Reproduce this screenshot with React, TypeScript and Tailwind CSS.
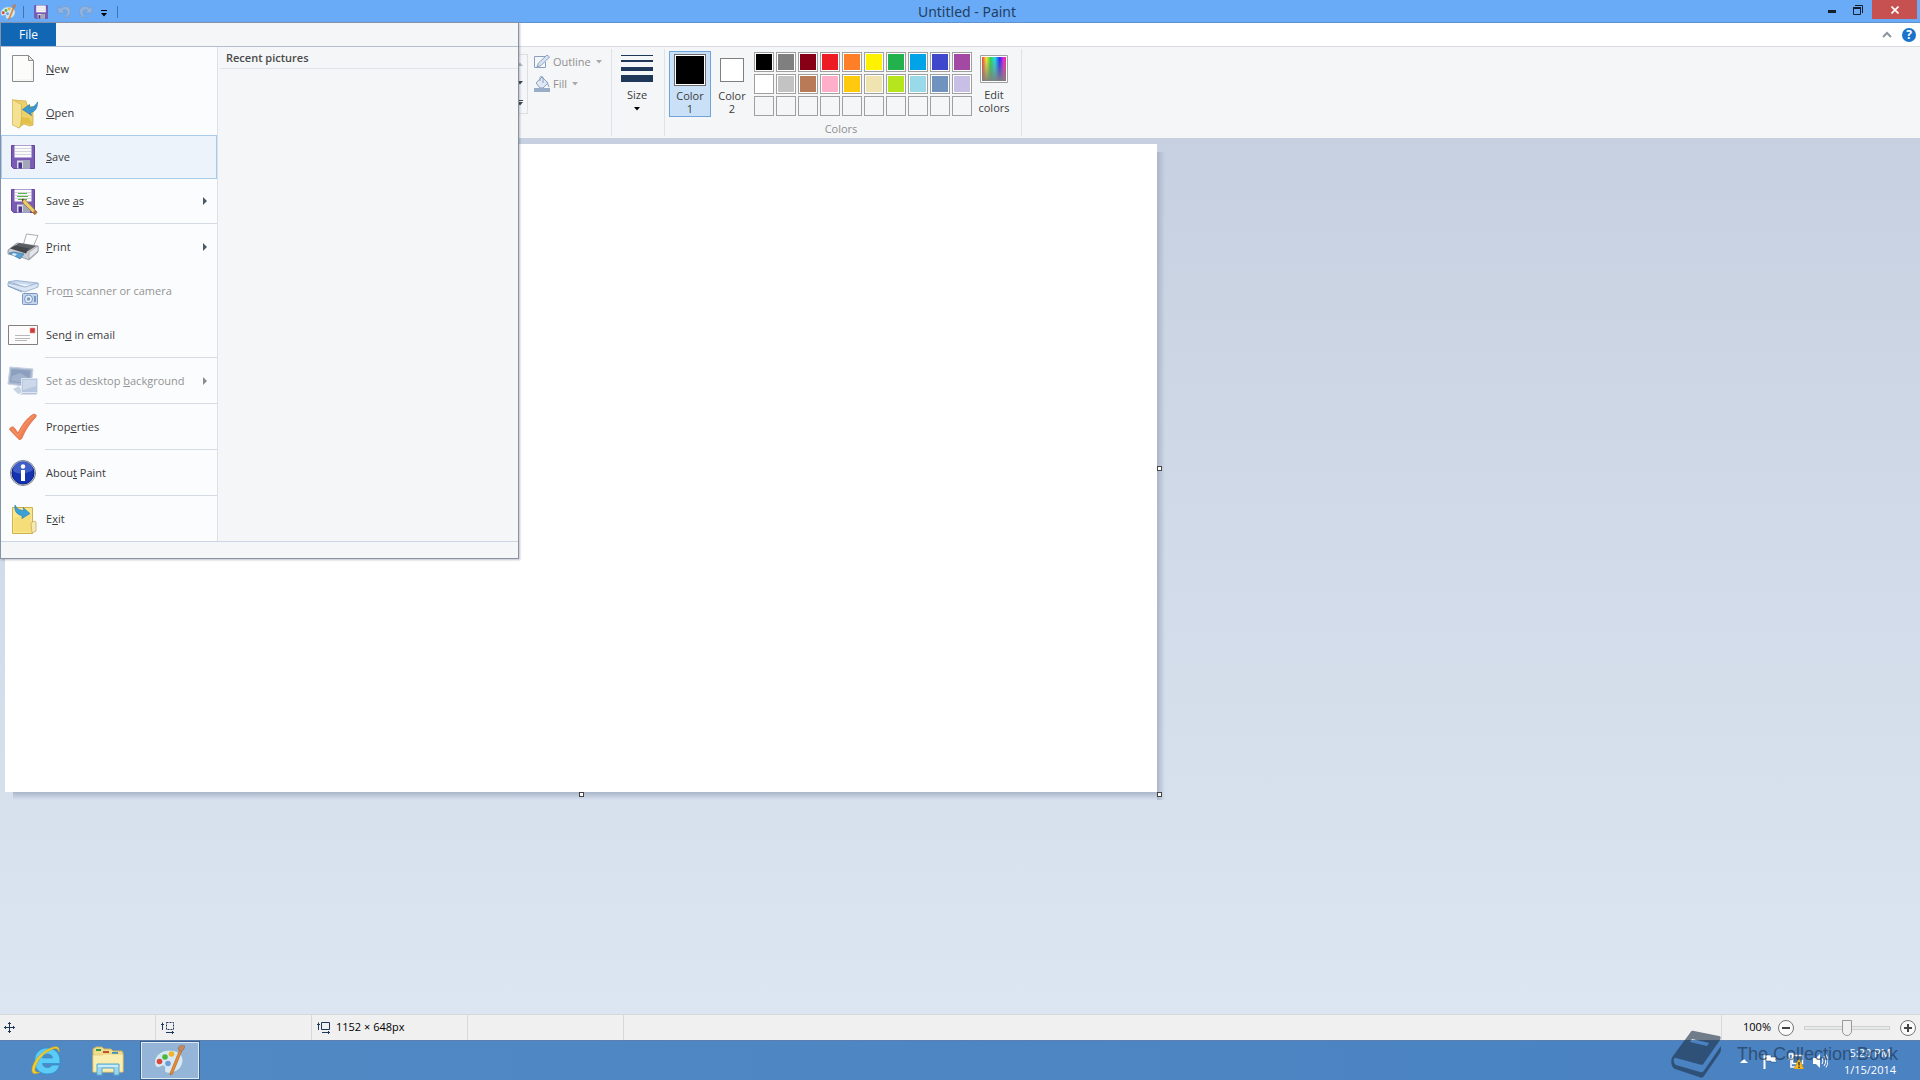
import React, { ReactNode, useState } from 'react';

interface MenuEntry {
  id: string;
  label: ReactNode;
  icon: ReactNode;
  disabled?: boolean;
  submenu?: boolean;
  active?: boolean;
  divided?: boolean;
}

const palette = [
  ['#000000', '#7f7f7f', '#880015', '#ed1c24', '#ff7f27', '#fff200', '#22b14c', '#00a2e8', '#3f48cc', '#a349a4'],
  ['#ffffff', '#c3c3c3', '#b97a57', '#ffaec9', '#ffc90e', '#efe4b0', '#b5e61d', '#99d9ea', '#7092be', '#c8bfe7'],
];

/* ---------- icons ---------- */

function PaletteIcon({ className }: { className: string }) {
  return (
    <svg viewBox="0 0 32 32" className={className} aria-hidden="true">
      <path
        d="M16 6C8 6 1.500 12 1.500 18c0 4 2 6 4.500 5.500 2-.5 2.500-2 4.500-1.500s1 3 1 5c1 2.500 4 2.500 7 2 7-1.500 12-7 11.500-13.500C29.500 9 23 6 16 6z"
        fill="#d6e8f4"
        stroke="#8fb4d0"
      />
      <circle cx="12" cy="13" r="2.800" fill="#4cb83c" />
      <circle cx="18.500" cy="10" r="2.800" fill="#f0b429" />
      <circle cx="6.500" cy="17.500" r="2.800" fill="#d9483b" />
      <circle cx="15" cy="19.500" r="2.800" fill="#6b9fd6" />
      <path d="M27 5l2 1.500L19.500 30l-2.500 1 .5-3z" fill="#e88a34" stroke="#b0601c" strokeWidth=".6" />
      <path d="M25 5c0-3 3-4.500 7-3-1 3-2 5-4 5.500z" fill="#c08a60" stroke="#94623c" strokeWidth=".5" />
    </svg>
  );
}

function FloppyShape({ children }: { children?: ReactNode }) {
  return (
    <>
      <path d="M4.500 4.500h23v23h-21l-2-2z" fill="#7a5cb4" stroke="#6345a0" />
      <path d="M7.500 4.500h17v12h-17z" fill="#fafafc" />
      <path d="M8 7.500h16M8 10.500h16M8 13.500h16" stroke="#d4d4da" />
      <path d="M10 19.500h13v8H10z" fill="#d9dbe3" />
      <path d="M16 19.500h7v8h-7z" fill="#a3a8b8" />
      <path d="M11.500 21.500h3.500v6h-3.500z" fill="#4f3790" />
      {children}
    </>
  );
}

function FloppyIcon({ className }: { className: string }) {
  return (
    <svg viewBox="0 0 32 32" className={className} aria-hidden="true">
      <FloppyShape />
    </svg>
  );
}

function SaveAsIcon() {
  return (
    <svg viewBox="0 0 32 32" className="size-8" aria-hidden="true">
      <FloppyShape>
        <path d="M11 8.500h9M10 11.500h11M11 14.500h9" stroke="#52b648" strokeWidth="1.200" />
        <path d="M15 14l3 .5L30 27l-2.500 2.500L16 18z" fill="#eccb6c" stroke="#8f7437" strokeWidth=".8" />
        <path d="M15 14l2 .5-1.500 2z" fill="#333" />
        <path d="M28 25l2.500 2.500-2.500 2.500-2.500-2.500z" fill="#b5714a" />
      </FloppyShape>
    </svg>
  );
}

function NewIcon() {
  return (
    <svg viewBox="0 0 32 32" className="size-8" aria-hidden="true">
      <path d="M5.500 2.500h16l5 5v21h-21z" fill="#fcfcfb" stroke="#8c8c8c" />
      <path d="M21.500 2.500v5h5z" fill="#e8e8e8" stroke="#8c8c8c" />
      <path d="M8 27h17V10" fill="none" stroke="#eeeeec" />
    </svg>
  );
}

function OpenIcon() {
  return (
    <svg viewBox="0 0 32 32" className="size-8" aria-hidden="true">
      <path d="M6 3l13 1 1 4 6 2v18l-3 1-6-2-6 4z" fill="#ecd06a" stroke="#cfae45" strokeWidth=".8" />
      <path d="M5.500 2.500l9 5v17l-2 6.500-7-3z" fill="#f5e193" stroke="#d2b650" strokeWidth=".8" />
      <path d="M14 20l8 1 4 7-9-2-4 4z" fill="#dfb93c" opacity=".7" />
      <path d="M15.500 12.500l7-5v3c3 0 6-1.500 8-5.500 0 7-3 10-7 10.500l1 3z" fill="#3b97cf" stroke="#1f74ad" strokeWidth=".6" />
    </svg>
  );
}

function PrintIcon() {
  return (
    <svg viewBox="0 0 32 32" className="size-8" aria-hidden="true">
      <path d="M16.500 13l3-10L31 4.500 26 16z" fill="#fdfdfd" stroke="#999" strokeWidth=".8" />
      <path d="M1 19l9-7 21 3v6l-9 8-5-2-16-4z" fill="#c9cdd3" stroke="#7d838c" strokeWidth=".7" />
      <path d="M5 17l7-5 17 3-8 5z" fill="#5b5e63" />
      <path d="M3 17.500l5-3 14 3-3 5z" fill="#43464b" />
      <path d="M22 21l9-6v5l-9 8z" fill="#e4e6e9" stroke="#8c9198" strokeWidth=".6" />
      <path d="M2 22l5-1 10 2-4 5z" fill="#5a9fd4" stroke="#376f9c" strokeWidth=".6" />
      <path d="M6 22l4 1-2 2-3-1z" fill="#d7ecf8" />
    </svg>
  );
}

function ScannerIcon() {
  return (
    <svg viewBox="0 0 32 32" className="size-8" aria-hidden="true">
      <path d="M1 7l8-1.500L31 8v2l-6 3z" fill="#cbd9ed" stroke="#8ea8cc" strokeWidth=".8" />
      <path d="M1 8l17 4 13-4v4l-13 5L1 11z" fill="#dbe5f3" stroke="#8ea8cc" strokeWidth=".8" />
      <path d="M8 8l15 2-5 1.500z" fill="#f0f5fb" />
      <path d="M1 11l14 6" stroke="#7f9bc3" />
      <rect x="15.500" y="18.500" width="15" height="11" rx="1" fill="#c6d6ec" stroke="#7a97c0" />
      <circle cx="21.500" cy="24" r="4" fill="#e6eef8" stroke="#7a97c0" />
      <circle cx="21.500" cy="24" r="1.800" fill="#7f9bc3" />
      <path d="M27 21h2v6h-2z" fill="#7a97c0" />
    </svg>
  );
}

function MailIcon() {
  return (
    <svg viewBox="0 0 32 32" className="size-8" aria-hidden="true">
      <path d="M1.500 6.500h29v19h-29z" fill="#fcfcfc" stroke="#85807e" />
      <path d="M8 16.500h15M8 19.500h15M8 21.500h12" stroke="#b9b9b9" />
      <path d="M23 9h5v5h-5z" fill="#cf3a39" stroke="#e8a2a0" strokeWidth=".6" />
    </svg>
  );
}

function DesktopIcon() {
  return (
    <svg viewBox="0 0 32 32" className="size-8" aria-hidden="true">
      <path d="M3 2l23 2-2 18L1 19z" fill="#a9b8cf" stroke="#c6d1e1" />
      <path d="M4.500 4l19 1.500L22 19 3 17z" fill="#8c9fbe" />
      <path d="M5 11l8-3 9 5-1 5-17-2z" fill="#a2b3cd" />
      <path d="M6 24l6-3 4 6-5 2z" fill="#c8d3e3" />
      <path d="M14.500 13.500h16v14h-16z" fill="#b6c7df" stroke="#dde6f1" />
      <path d="M16 15h13v6l-13 4z" fill="#cdd9ea" />
      <path d="M16 28h14v1.500H12z" fill="#b7c4d8" />
    </svg>
  );
}

function CheckIcon() {
  return (
    <svg viewBox="0 0 32 32" className="size-8" aria-hidden="true">
      <path
        d="M2.500 18.500c0-2 3.500-3.500 4.500-2l4 5.500C15 14 20 7 26 3.500c2-.8 4.500.5 2.500 3C22 13 18 20 15 27c-1 2-3 2-4 .5z"
        fill="#f08055"
        stroke="#dd6c40"
        strokeWidth=".8"
      />
      <path d="M5 18l6 7C15 17 20 10 27 4.500" fill="none" stroke="#f28f66" strokeWidth="1.500" />
    </svg>
  );
}

function InfoIcon() {
  return (
    <svg viewBox="0 0 32 32" className="size-8" aria-hidden="true">
      <circle cx="16" cy="16" r="12.500" fill="#d3d7dd" stroke="#7b818c" />
      <circle cx="16" cy="16" r="11" fill="#1433b0" stroke="#0c2385" />
      <path d="M6 14a10 10 0 0 1 20-1c-6 4-14 5-20 1z" fill="#5b7bdc" opacity=".6" />
      <circle cx="16" cy="9.500" r="2.200" fill="#fff" />
      <path d="M14 13h4v11h-4z" fill="#fff" />
    </svg>
  );
}

function ExitIcon() {
  return (
    <svg viewBox="0 0 32 32" className="size-8" aria-hidden="true">
      <path d="M5.500 4.500h20v26h-20z" fill="#f8e78f" stroke="#d0b24c" />
      <path d="M7 15l17-4v18H7z" fill="#f3da70" opacity=".7" />
      <path d="M24 20l3-2 2 1v9l-4 2z" fill="#f6eab4" stroke="#bda457" strokeWidth=".7" />
      <path d="M8 2c2 4 5 5.500 9 5.500l-1-3 7 6-8 5v-3C10 12 7 8 8 2z" fill="#3aa0d8" stroke="#2178ac" strokeWidth=".6" />
    </svg>
  );
}

function Undo({ flip }: { flip?: boolean }) {
  return (
    <svg viewBox="0 0 16 16" className={flip ? 'size-4 -scale-x-100' : 'size-4'} aria-hidden="true">
      <path
        d="M2 2v7h7L6.500 6.500C9 4.500 11.500 6 11 9c-.3 2-1.500 3.500-3.500 5C12 13.500 14.500 11 14.500 7.500 14.500 2.500 8.500.5 4.500 4.500z"
        fill="#93b4dc"
        stroke="#7a9cc8"
        strokeWidth=".8"
      />
    </svg>
  );
}

function DownArrow({ className }: { className: string }) {
  return (
    <svg viewBox="0 0 6 4" className={`h-1 w-1.5 ${className}`} aria-hidden="true">
      <path d="M0 0h6L3 3.500z" fill="currentColor" />
    </svg>
  );
}

function ExplorerLogo({ className }: { className: string }) {
  return (
    <svg viewBox="0 0 32 30" className={className} aria-hidden="true">
      <path d="M1 3l3-2h6l2 2h7l2 2h9l1 2v19H1z" fill="#f0dc8c" stroke="#cfb25a" />
      <path d="M4 3h5v2H4z" fill="#2f9e44" />
      <path d="M11 5h6v2h-6z" fill="#c0532f" />
      <path d="M20 6h6v2h-6z" fill="#3a8ec2" />
      <path d="M1 9h9l2-1h19v18H1z" fill="#f9edb0" stroke="#dcc470" strokeWidth=".6" />
      <path d="M5 18h22v11h-5v-7H10v7H5z" fill="#9bd6ee" stroke="#5aa9cf" />
      <path d="M6 19h20v2H6z" fill="#c9ecf8" />
    </svg>
  );
}

function InternetLogo({ className }: { className: string }) {
  return (
    <svg viewBox="0 0 32 32" className={className} aria-hidden="true">
      <path
        d="M17 4c8 0 13 5.500 13 13v2.500H12.500c.5 3 2.500 4 5 4 2 0 3.500-.8 4.500-2.500h7.500C28 27 23.500 30 17 30 9.500 30 4.500 24.500 4.500 17S9.500 4 17 4zm-4.500 10h10c-.5-3-2.500-4-5-4s-4.500 1-5 4z"
        fill="#5ccbf5"
        stroke="#2792cf"
        strokeWidth=".7"
      />
      <path
        d="M29 8c1-5-2-6.500-7-4.500C12 7 3 17 2 25c-.5 5 3 6 8 3-4 1-5.500-.5-5-3.500C6.500 17 14 8 23 5c3-1 5-.5 6 3z"
        fill="#f5cf2e"
        stroke="#d3a416"
        strokeWidth=".6"
      />
    </svg>
  );
}

/* ---------- data ---------- */

const menu: MenuEntry[] = [
  { id: 'new', label: <><u>N</u>ew</>, icon: <NewIcon /> },
  { id: 'open', label: <><u>O</u>pen</>, icon: <OpenIcon /> },
  { id: 'save', label: <><u>S</u>ave</>, icon: <FloppyIcon className="size-8" />, active: true },
  { id: 'save-as', label: <>Save <u>a</u>s</>, icon: <SaveAsIcon />, submenu: true, divided: true },
  { id: 'print', label: <><u>P</u>rint</>, icon: <PrintIcon />, submenu: true },
  { id: 'scanner', label: <>Fro<u>m</u> scanner or camera</>, icon: <ScannerIcon />, disabled: true },
  { id: 'email', label: <>Sen<u>d</u> in email</>, icon: <MailIcon />, divided: true },
  { id: 'desktop', label: <>Set as desktop <u>b</u>ackground</>, icon: <DesktopIcon />, disabled: true, submenu: true, divided: true },
  { id: 'properties', label: <>Prop<u>e</u>rties</>, icon: <CheckIcon />, divided: true },
  { id: 'about', label: <>Abou<u>t</u> Paint</>, icon: <InfoIcon />, divided: true },
  { id: 'exit', label: <>E<u>x</u>it</>, icon: <ExitIcon /> },
];

/* ---------- sections ---------- */

function TitleBar() {
  return (
    <header className="flex h-[23px] items-start border-b border-[#5f93d0] bg-[#6aabf7]">
      <div className="flex h-[23px] items-center">
        <PaletteIcon className="size-4" />
        <span className="ml-[7px] h-3 w-px bg-[#3f74b4]" />
        <button className="ml-2" aria-label="Save"><FloppyIcon className="size-[18px]" /></button>
        <button className="ml-1.5" aria-label="Undo"><Undo /></button>
        <button className="ml-1.5" aria-label="Redo"><Undo flip /></button>
        <button className="ml-[7px] flex flex-col items-center gap-0.5 pt-1" aria-label="Customize Quick Access Toolbar">
          <span className="h-px w-1.5 bg-black" />
          <DownArrow className="text-black" />
        </button>
        <span className="ml-2.5 h-3 w-px bg-[#3f74b4]" />
      </div>
      <h1 className="flex-1 pt-px text-center font-['Noto_Sans',sans-serif] text-[14px] leading-[22px] text-[#1f3f63]">Untitled - Paint</h1>
      <div className="flex">
        <button className="flex h-[19px] w-7 items-center justify-center" aria-label="Minimize">
          <span className="mt-1 ml-1 h-[3px] w-2 bg-[#14202e]" />
        </button>
        <button className="flex h-[19px] w-7 items-center justify-center" aria-label="Restore">
          <svg viewBox="0 0 10 10" className="size-2.5" aria-hidden="true">
            <path d="M2 .5h7.500V8M.5 3h7v6.500h-7z" fill="none" stroke="#14202e" />
            <path d="M0 3h8" stroke="#14202e" strokeWidth="2" />
          </svg>
        </button>
        <button className="mr-[3px] flex h-[19px] w-[45px] items-center justify-center bg-[#c75050]" aria-label="Close">
          <svg viewBox="0 0 8 8" className="size-2" aria-hidden="true">
            <path d="M.5.5l7 7M7.500.5l-7 7" stroke="#fff" strokeWidth="1.600" />
          </svg>
        </button>
      </div>
    </header>
  );
}

function TabRow() {
  return (
    <div className="flex h-6 items-center justify-end gap-2.5 border-b border-[#d9dbde] bg-white pr-1">
      <button aria-label="Minimize the Ribbon">
        <svg viewBox="0 0 10 7" className="h-[7px] w-2.5" aria-hidden="true">
          <path d="M1 6l4-4 4 4" fill="none" stroke="#8d949e" strokeWidth="2" />
        </svg>
      </button>
      <button className="size-3.5 rounded-full bg-[#1b74c9] text-[12px] leading-[14px] font-bold text-white" aria-label="Help">?</button>
    </div>
  );
}

function Ribbon() {
  return (
    <div className="flex h-[91px] bg-[#f5f6f7] pt-0.5 text-[11px] leading-[13px] text-[#3c3c3c]">
      <div className="flex w-[528px] justify-end pt-[5px]">
        <div className="flex h-[60px] w-4 flex-col items-end justify-around border border-[#dcdee1] pr-1">
          <DownArrow className="rotate-180 text-[#b3b6bb]" />
          <DownArrow className="text-[#444b55]" />
          <span className="flex flex-col gap-px text-[#444b55]"><span className="h-px w-1.5 bg-[#444b55]" /><DownArrow className="" /></span>
        </div>
      </div>
      <div className="flex w-[83px] flex-col gap-1.5 pt-[5px] pl-1.5 text-[#8f8f8f]">
        <button disabled className="flex h-4 items-center gap-[3px]">
          <svg viewBox="0 0 16 16" className="size-4" aria-hidden="true">
            <path d="M11 2.500H.5v11h11V8" fill="none" stroke="#8aa0c0" />
            <path d="M3 13l1.500-4L13 1l2.500 2L7 11.500z" fill="#d9e4f3" stroke="#8aa0c0" />
          </svg>
          <span className="pb-px">Outline</span>
          <DownArrow className="ml-0.5 text-[#aaa]" />
        </button>
        <button disabled className="flex h-4 items-center gap-[3px]">
          <svg viewBox="0 0 16 16" className="size-4" aria-hidden="true">
            <path d="M2 7l6-6 6 6-5 5H6z" fill="#dfe8f4" stroke="#8aa0c0" />
            <path d="M6 5V1.500C6 0 9 0 9 1.500V7M13 6l2 5" fill="none" stroke="#8aa0c0" />
            <path d="M0 12h16v4H0z" fill="#9aadc8" />
          </svg>
          <span className="pb-px">Fill</span>
          <DownArrow className="ml-0.5 text-[#aaa]" />
        </button>
      </div>
      <button className="mb-0.5 flex w-[54px] flex-col items-center border-x border-[#dfe1e4] pt-1.5 pr-0.5">
        <span className="flex w-8 flex-col">
          <span className="h-px bg-[#1f3759]" />
          <span className="mt-1 h-0.5 bg-[#1f3759]" />
          <span className="mt-[5px] h-1 bg-[#1f3759]" />
          <span className="mt-1 h-[7px] bg-[#1f3759]" />
        </span>
        <span className="mt-1.5">Size</span>
        <DownArrow className="mt-1.5 text-black" />
      </button>
      <div className="mb-0.5 flex flex-col border-r border-[#dfe1e4]">
        <div className="flex pt-0.5 pl-1">
          <button className="flex h-[66px] w-[42px] flex-col items-center border border-[#6fa3dc] bg-[#c9e0f7] pt-0.5">
            <span className="size-8 border border-[#6d6d6d] bg-black outline-1 -outline-offset-2 outline-white" />
            <span className="mt-[3px]">Color<br />1</span>
          </button>
          <button className="flex h-[66px] w-[42px] flex-col items-center pt-[7px]">
            <span className="size-6 border border-[#7f7f7f] bg-white" />
            <span className="mt-[7px]">Color<br />2</span>
          </button>
          <div className="ml-px grid grid-cols-10 content-start gap-0.5 pt-px" role="group" aria-label="Color palette">
            {palette.flat().map((c) => (
              <button key={c} aria-label={c} className="size-5 border border-[#a0a0a0] bg-white p-px">
                <span className="block size-4" style={{ backgroundColor: c }} />
              </button>
            ))}
            {palette[0].map((c) => (
              <button key={`custom-${c}`} aria-label="Custom color" className="size-5 border border-[#a0a0a0]" />
            ))}
          </div>
          <button className="flex h-[66px] w-11 flex-col items-center pt-1">
            <svg viewBox="0 0 28 28" className="size-7" aria-hidden="true">
              <defs>
                <linearGradient id="hue">
                  <stop offset="0" stopColor="#f03c3c" />
                  <stop offset=".18" stopColor="#f0e13c" />
                  <stop offset=".36" stopColor="#2fd24a" />
                  <stop offset=".54" stopColor="#27d8e8" />
                  <stop offset=".74" stopColor="#2b2be8" />
                  <stop offset=".9" stopColor="#e62be0" />
                  <stop offset="1" stopColor="#f0306c" />
                </linearGradient>
                <linearGradient id="gray" x2="0" y2="1">
                  <stop offset=".1" stopColor="#808080" stopOpacity="0" />
                  <stop offset="1" stopColor="#808080" stopOpacity=".95" />
                </linearGradient>
              </defs>
              <path d="M.5.5h27v27H.5z" fill="#fff" stroke="#a0a0a0" />
              <path d="M2 2h24v24H2z" fill="url(#hue)" />
              <path d="M2 2h24v24H2z" fill="url(#gray)" />
            </svg>
            <span className="mt-[5px]">Edit<br />colors</span>
          </button>
          <span className="w-[5px]" />
        </div>
        <span className="mt-[5px] pr-1 text-center text-[#8f8f8f]">Colors</span>
      </div>
    </div>
  );
}

function FileMenu() {
  return (
    <nav className="absolute top-[22px] left-0 w-[519px] border border-[#8592a8] bg-[#f5f6f7] shadow-[1px_1px_2px_#00000040]">
      <div className="flex h-6 border-b border-[#b3bed0]">
        <button className="w-[55px] bg-[#1267b5] text-[12px] text-white">File</button>
      </div>
      <div className="flex border-b border-[#ccd6e2]">
        <ul className="w-[217px] border-r border-[#dbe1e8] bg-[#fbfcfe]">
          {menu.map((item) => (
            <li key={item.id}>
              <button
                disabled={item.disabled}
                className={`flex h-11 w-full items-center border pl-[5px] text-[11px] ${
                  item.active ? 'border-[#a9cbea] bg-[#ecf3fb]' : 'border-transparent'
                } ${item.disabled ? 'text-[#939393]' : 'text-[#3a3a3a]'}`}
              >
                {item.icon}
                <span className="ml-[7px] flex-1 text-left">{item.label}</span>
                {item.submenu && (
                  <svg viewBox="0 0 4 8" className="mr-[9px] h-2 w-1" aria-hidden="true">
                    <path d="M0 0l4 4-4 4z" fill={item.disabled ? '#8c8c8c' : '#4d5866'} />
                  </svg>
                )}
              </button>
              {item.divided && <div className="mb-px ml-11 h-px bg-[#d5dbe4]" />}
            </li>
          ))}
        </ul>
        <section className="flex-1 pl-0.5">
          <h2 className="h-[22px] border-b border-[#e0e3e8] pl-1.5 text-[11px] leading-[22px] font-semibold text-[#4a4a4a]">Recent pictures</h2>
        </section>
      </div>
      <div className="h-4" />
    </nav>
  );
}

function Handle({ className }: { className: string }) {
  return <span className={`absolute size-[5px] border border-[#444] bg-white ${className}`} />;
}

function Workspace() {
  return (
    <main className="flex-1 bg-linear-to-b from-[#c6d0e0] to-[#dce6f2] pt-1.5 pl-[5px]">
      <div className="relative h-[648px] w-[1152px] bg-white">
        <span className="absolute top-2 -right-2 -bottom-2 w-2 bg-linear-to-r from-[#a9b6c9] to-[#a9b6c900]" />
        <span className="absolute right-0 -bottom-2 left-2 h-2 bg-linear-to-b from-[#a9b6c9] to-[#a9b6c900]" />
        <Handle className="top-[322px] -right-[5px]" />
        <Handle className="-bottom-[5px] left-[574px]" />
        <Handle className="-right-[5px] -bottom-[5px]" />
      </div>
    </main>
  );
}

function StatusBar() {
  const [zoom, setZoom] = useState(50);
  return (
    <footer className="flex h-[26px] items-stretch border-t border-[#d5d7da] bg-[#f0f0f0] text-[11px] text-black">
      <div className="flex w-[156px] items-center border-r border-[#d9d9d9] pl-1">
        <svg viewBox="0 0 11 11" className="size-[11px]" aria-hidden="true">
          <path d="M5.500 0v11M0 5.500h11M4 1.500h3M4 9.500h3M1.500 4v3M9.500 4v3" stroke="#1f3759" />
        </svg>
      </div>
      <div className="flex w-[156px] items-center border-r border-[#d9d9d9] pl-[5px]">
        <svg viewBox="0 0 13 12" className="h-3 w-[13px]" aria-hidden="true">
          <path d="M1.500 8V.5M0 2.500h3M5 10.500h8M11.500 9v3" stroke="#1f3759" />
          <path d="M5.500.5h7v7h-7z" fill="none" stroke="#1f3759" strokeDasharray="2 1" />
        </svg>
      </div>
      <div className="flex w-[156px] items-center gap-1.5 border-r border-[#d9d9d9] pl-[5px]">
        <svg viewBox="0 0 13 12" className="h-3 w-[13px]" aria-hidden="true">
          <path d="M1.500 8V.5M0 2.500h3M5 10.500h8M11.500 9v3" stroke="#1f3759" />
          <path d="M4.500.5h8v7h-8z" fill="none" stroke="#1f3759" />
        </svg>
        <span>1152 × 648px</span>
      </div>
      <div className="w-[156px] border-r border-[#d9d9d9]" />
      <div className="flex-1 border-r border-[#d9d9d9]" />
      <div className="flex w-[198px] items-center justify-end pr-1">
        <label htmlFor="zoom" className="mr-[7px]">100%</label>
        <button aria-label="Zoom out">
          <svg viewBox="0 0 16 16" className="size-4" aria-hidden="true">
            <circle cx="8" cy="8" r="7.500" fill="#fafafa" stroke="#777" />
            <path d="M4 8h8" stroke="#444" strokeWidth="2" />
          </svg>
        </button>
        <input
          id="zoom"
          type="range"
          value={zoom}
          onChange={(e) => setZoom(Number(e.target.value))}
          className="mx-2.5 h-4 w-[86px] appearance-none bg-transparent [&::-webkit-slider-runnable-track]:h-1 [&::-webkit-slider-runnable-track]:border [&::-webkit-slider-runnable-track]:border-[#d0d0d0] [&::-webkit-slider-runnable-track]:bg-[#e7eaea] [&::-webkit-slider-thumb]:-mt-[7px] [&::-webkit-slider-thumb]:h-4 [&::-webkit-slider-thumb]:w-2.5 [&::-webkit-slider-thumb]:appearance-none [&::-webkit-slider-thumb]:rounded-b-md [&::-webkit-slider-thumb]:border [&::-webkit-slider-thumb]:border-[#999] [&::-webkit-slider-thumb]:bg-[#f0f0f0]"
        />
        <button aria-label="Zoom in">
          <svg viewBox="0 0 16 16" className="size-4" aria-hidden="true">
            <circle cx="8" cy="8" r="7.500" fill="#fafafa" stroke="#777" />
            <path d="M4 8h8M8 4v8" stroke="#444" strokeWidth="2" />
          </svg>
        </button>
      </div>
    </footer>
  );
}

function Taskbar() {
  return (
    <div className="relative flex h-10 items-stretch border-t border-[#5b7fae] bg-linear-to-r from-[#5089c4] via-[#4d86c2] to-[#4a82c2] text-white">
      <button className="flex w-[62px] items-center justify-center pb-0.5 pl-[30px]" aria-label="Internet Explorer">
        <InternetLogo className="size-8 shrink-0" />
      </button>
      <button className="flex w-[78px] items-center justify-center pl-3.5" aria-label="File Explorer">
        <ExplorerLogo className="h-[30px] w-8" />
      </button>
      <button className="flex w-[60px] items-center justify-center border border-[#3a5f8c] bg-[#94b4d8] pr-0.5 pb-0.5 inset-ring-1 inset-ring-[#dce8f4]" aria-label="Paint">
        <PaletteIcon className="size-8" />
      </button>
      <div className="ml-auto flex items-center gap-2.5">
        <button aria-label="Show hidden icons">
          <svg viewBox="0 0 8 5" className="h-[5px] w-2" aria-hidden="true">
            <path d="M0 5l4-4 4 4z" fill="#fff" />
          </svg>
        </button>
        <svg viewBox="0 0 16 16" className="ml-1 size-4" aria-hidden="true">
          <path d="M2.500 1v15" stroke="#fff" strokeWidth="2" />
          <path d="M4 2h5v2h6l-1.500 2.500L15 9H9V8H4z" fill="#fff" stroke="#27486e" strokeWidth=".5" />
        </svg>
        <svg viewBox="0 0 16 16" className="size-4" aria-hidden="true">
          <path d="M4.500 2.500h10v8h-10z" fill="#3c6da4" stroke="#fff" strokeWidth="1.500" />
          <path d="M1 1h4v5H1zM3 6v8h4" fill="none" stroke="#fff" strokeWidth="1.500" />
          <path d="M11 5.500L16 16H6z" fill="#f7b924" stroke="#b9820c" strokeWidth=".5" />
          <path d="M11 9v3.500M11 13.500V15" stroke="#222" strokeWidth="1.200" />
        </svg>
        <svg viewBox="0 0 16 16" className="-ml-0.5 size-4" aria-hidden="true">
          <path d="M1 5h3l4-4v14l-4-4H1z" fill="#fff" />
          <path d="M10 5q2 3 0 6M12 3q3.500 5 0 10M14 1.500q4 6.500 0 13" fill="none" stroke="#fff" />
        </svg>
        <time className="mr-[22px] ml-1 w-[56px] text-center text-[11px] leading-[17px] whitespace-nowrap" dateTime="2014-01-15T17:20">
          5:20 PM<br />1/15/2014
        </time>
      </div>
      <div className="pointer-events-none absolute right-[22px] bottom-0.5 flex items-center gap-4 text-[#1d3048] opacity-60">
        <svg viewBox="0 0 50 48" className="h-12 w-[50px]" aria-hidden="true">
          <path
            fillRule="evenodd"
            d="M23 1l25 5c2 .5 2 2 1 4L33 33c-1 2-2 2-4 1.500L5 28c-3-1-3 5 0 7l24 7c2 .5 3 0 4-1.500L50 16c0 3 0 5-1 7L33 46c-1 1.500-3 2-5 1L4 39c-4-2-5-9-2-13L19 3c1-2 2-2.500 4-2zm-2 8l-2 3 17 4 2-3z"
            fill="currentColor"
          />
        </svg>
        <span className="font-['Liberation_Sans',sans-serif] text-[18px]">The Collection Book</span>
      </div>
    </div>
  );
}

export default function App() {
  return (
    <div className="relative flex min-h-screen flex-col font-['Open_Sans','Noto_Sans',sans-serif]">
      <TitleBar />
      <TabRow />
      <Ribbon />
      <Workspace />
      <StatusBar />
      <Taskbar />
      <FileMenu />
    </div>
  );
}
